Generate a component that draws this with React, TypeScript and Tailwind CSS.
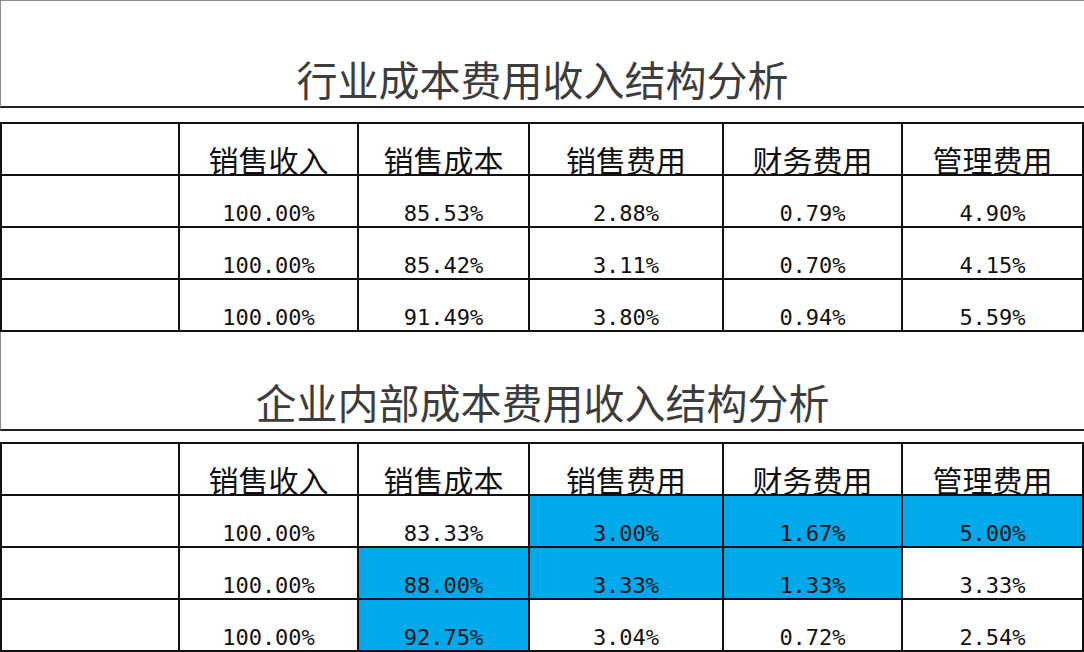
import React from 'react';

const headers = ['销售收入', '销售成本', '销售费用', '财务费用', '管理费用'];
const colWidths = ['w-[178px]', 'w-[179px]', 'w-[171px]', 'w-[194px]', 'w-[179px]', 'w-[181px]'];

interface Section {
  title: string;
  rows: string[][];
  // highlighted cells per row (index into the values)
  marks?: number[][];
}

const sections: Section[] = [
  {
    title: '行业成本费用收入结构分析',
    rows: [
      ['100.00%', '85.53%', '2.88%', '0.79%', '4.90%'],
      ['100.00%', '85.42%', '3.11%', '0.70%', '4.15%'],
      ['100.00%', '91.49%', '3.80%', '0.94%', '5.59%'],
    ],
  },
  {
    title: '企业内部成本费用收入结构分析',
    rows: [
      ['100.00%', '83.33%', '3.00%', '1.67%', '5.00%'],
      ['100.00%', '88.00%', '3.33%', '1.33%', '3.33%'],
      ['100.00%', '92.75%', '3.04%', '0.72%', '2.54%'],
    ],
    marks: [[2, 3, 4], [1, 2, 3], [1]],
  },
];

const cjk = "font-['Noto_Sans_CJK_SC',sans-serif]";

const AnalysisBlock: React.FC<{ section: Section; first: boolean }> = ({ section, first }) => {
  return (
    <div>
      {/* title band */}
      <div
        className={`flex items-end justify-center pb-[7px] border-l border-[#8a8a8a] border-b-2 border-b-[#222] ${
          first ? 'h-[108px] border-t border-t-[#8a8a8a]' : 'h-[99px]'
        }`}
      >
        <span className={`${cjk} text-[41px] leading-none text-[#3d3d3d]`}>{section.title}</span>
      </div>
      <div className={first ? 'h-[14px]' : 'h-[11px]'} />
      <table className="border-collapse table-fixed w-[1083px]">
        <tbody>
          <tr className="h-[52px]">
            <td className={`${colWidths[0]} border-2 border-[#111] p-0`} />
            {headers.map((h, i) => (
              <td key={h} className={`${colWidths[i + 1]} border-2 border-[#111] p-0 align-bottom text-center`}>
                <span className={`${cjk} text-[30px] leading-none text-[#111] block`}>{h}</span>
              </td>
            ))}
          </tr>
          {section.rows.map((row, r) => (
            <tr key={r} className="h-[52px]">
              <td className="border-2 border-[#111] p-0" />
              {row.map((v, c) => {
                const marked = section.marks?.[r]?.includes(c);
                return (
                  <td
                    key={c}
                    className={`border-2 border-[#111] p-0 align-bottom text-center ${marked ? 'bg-[#00a9ea]' : 'bg-white'}`}
                  >
                    <span className="font-['DejaVu_Sans_Mono',monospace] text-[22px] leading-none text-[#111] block pb-[1px]">
                      {v}
                    </span>
                  </td>
                );
              })}
            </tr>
          ))}
        </tbody>
      </table>
    </div>
  );
};

export default function App() {
  return (
    <div className="w-[1084px] h-[652px] overflow-hidden bg-white">
      {sections.map((s, i) => (
        <AnalysisBlock key={s.title} section={s} first={i === 0} />
      ))}
    </div>
  );
}
